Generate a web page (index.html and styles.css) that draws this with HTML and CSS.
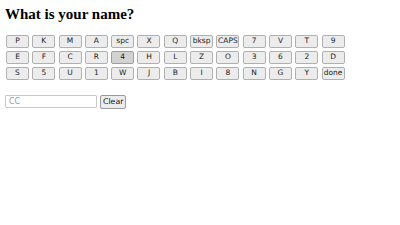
FILE: index.html
```html
<!DOCTYPE html>
<html lang="en">
<head>
    <meta charset="UTF-8">
    <title>What is your name?</title>
    <link rel="stylesheet" href="styles.css">
</head>
<body>
    <h1>What is your name?</h1>
    <div class="keyboard">
        <button class="key">P</button>
        <button class="key">K</button>
        <button class="key">M</button>
        <button class="key">A</button>
        <button class="key">spc</button>
        <button class="key">X</button>
        <button class="key">Q</button>
        <button class="key">bksp</button>
        <button class="key">CAPS</button>
        <button class="key">7</button>
        <button class="key">V</button>
        <button class="key">T</button>
        <button class="key">9</button>

        <button class="key">E</button>
        <button class="key">F</button>
        <button class="key">C</button>
        <button class="key">R</button>
        <button class="key hover">4</button>
        <button class="key">H</button>
        <button class="key">L</button>
        <button class="key">Z</button>
        <button class="key">O</button>
        <button class="key">3</button>
        <button class="key">6</button>
        <button class="key">2</button>
        <button class="key">D</button>

        <button class="key">S</button>
        <button class="key">5</button>
        <button class="key">U</button>
        <button class="key">1</button>
        <button class="key">W</button>
        <button class="key">J</button>
        <button class="key">B</button>
        <button class="key">I</button>
        <button class="key">8</button>
        <button class="key">N</button>
        <button class="key">G</button>
        <button class="key">Y</button>
        <button class="key">done</button>
    </div>
    <div class="entry">
        <input type="text" class="name-input" placeholder="CC">
        <button class="clear">Clear</button>
    </div>
</body>
</html>
```

FILE: styles.css
```css
* {
    box-sizing: border-box;
}
body {
    margin: 0;
    padding: 5px 5px;
    background: #fff;
    font-family: "Liberation Sans", Arial, sans-serif;
}
h1 {
    font-family: "Liberation Serif", "Times New Roman", serif;
    font-size: 15px;
    font-weight: bold;
    margin: 0 0 12px 0;
    line-height: 18px;
}
.keyboard {
    display: grid;
    grid-template-columns: repeat(13, 23px);
    column-gap: 3.3px;
    row-gap: 3.5px;
    margin-left: 1px;
}
.key {
    height: 12.5px;
    padding: 0;
    font-family: "DejaVu Sans", Verdana, sans-serif;
    font-size: 7.5px;
    color: #222;
    background: #ececec;
    border: 1px solid #b0b0b0;
    border-radius: 2px;
    line-height: 10px;
}
.key.hover {
    background: #d2d2d2;
    border-color: #9e9e9e;
}
.entry {
    display: flex;
    align-items: center;
    margin-top: 15px;
}
.name-input {
    width: 92px;
    height: 13px;
    font-size: 8px;
    padding: 0 3px;
    border: 1px solid #c8c8c8;
    border-radius: 1px;
    font-family: "DejaVu Sans", Verdana, sans-serif;
}
.name-input::placeholder {
    color: #9a9a9a;
}
.clear {
    margin-left: 3px;
    height: 14px;
    padding: 0 2px;
    font-size: 7.8px;
    font-family: "DejaVu Sans", Verdana, sans-serif;
    background: #ececec;
    border: 1px solid #9a9a9a;
    border-radius: 2px;
    color: #111;
}
```
